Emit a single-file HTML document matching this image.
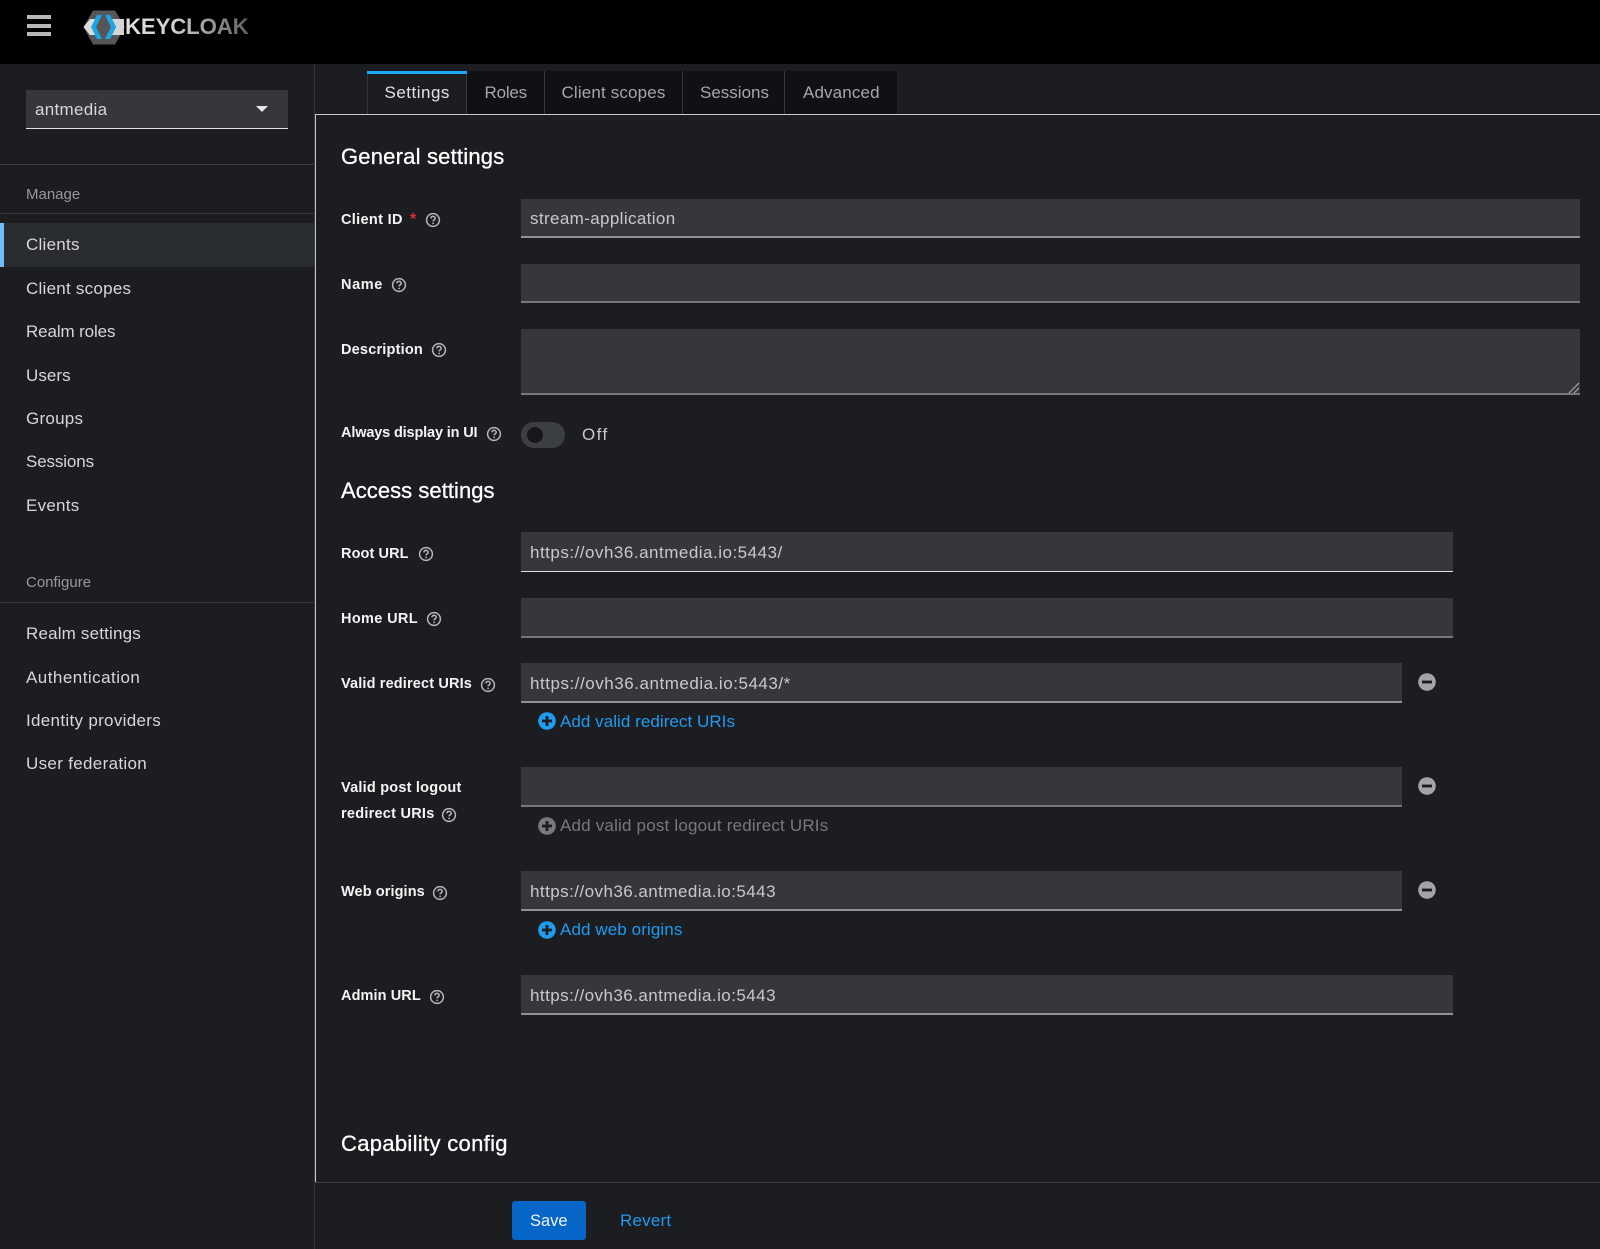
<!DOCTYPE html>
<html lang="en">
<head>
<meta charset="utf-8">
<title>Keycloak</title>
<style>
html,body{margin:0;padding:0;background:#1b1d21}
body{position:relative;width:1600px;height:1249px;overflow:hidden;font-family:"Liberation Sans",sans-serif;color:#ccc}
.a{position:absolute;display:block}
.t{position:absolute;white-space:nowrap;line-height:20px;font-size:17px}
.n{left:26px;color:#d6d7d8;letter-spacing:.25px}
.g{left:26px;font-size:15px;color:#97989a}
.l{left:341px;font-size:14.5px;font-weight:bold;letter-spacing:.1px;color:#f4f4f4}
.h{left:341px;font-size:22px;color:#fff;letter-spacing:.2px;-webkit-text-stroke:.3px #fff;line-height:26px}
.f{position:absolute;left:521px;background:#36373b;box-sizing:border-box;border-bottom:2px solid #75777a}
.w{border-bottom-color:#909295}
.v{left:530px;color:#c8c9ca;letter-spacing:.53px}
.v2{letter-spacing:.45px}
.k{color:#1f9bef}
.d{color:#77797c}
.tab{position:absolute;top:71px;height:43px;background:#0f1114;box-sizing:border-box;border-right:1px solid #34373b}
.q,.m,.p{position:absolute}
</style>
</head>
<body>
<!-- Header -->
<div class="a" style="left:0;top:0;width:1600px;height:64px;background:#000"></div>
<div class="a" style="left:27px;top:15px;width:24px;height:4px;background:#b8b8b8"></div>
<div class="a" style="left:27px;top:24px;width:24px;height:4px;background:#b8b8b8"></div>
<div class="a" style="left:27px;top:32px;width:24px;height:4px;background:#b8b8b8"></div>
<svg class="a" style="left:78px;top:4px" width="60" height="46" viewBox="78 4 60 46">
<polygon points="93,10.500 115,10.500 125,27 115,44.500 93,44.500 83.500,27" fill="#555658"/>
<polygon points="83.500,27 90,19 96,19 92,27 96,35 90,35" fill="#dcdcdc"/>
<polygon points="112,19 124,19 124,35 112,35 116,27" fill="#d4d4d4"/>
<polygon points="97,15 102,15 96,27 102,39 97,39 91,27" fill="#1da6e6"/>
<polygon points="105,15 110,15 116,27 110,39 105,39 111,27" fill="#1da6e6"/>
</svg>
<div class="t" style="left:125px;top:13px;line-height:28px;font-size:22.3px;font-weight:bold;letter-spacing:-.2px;color:transparent;background:linear-gradient(90deg,#e0e0e0 0%,#d0d0d0 40%,#5c5c5c 100%);-webkit-background-clip:text;background-clip:text">KEYCLOAK</div>

<!-- Sidebar -->
<div class="a" style="left:314px;top:64px;width:1px;height:1185px;background:#33363a"></div>
<div class="a" style="left:26px;top:90px;width:262px;height:39px;background:#36373b;box-sizing:border-box;border-bottom:1px solid #e0e0e0"></div>
<div class="t" style="left:35px;top:99.500px;letter-spacing:.3px;color:#d6d7d8">antmedia</div>
<div class="a" style="left:256px;top:106px;width:0;height:0;border-left:6px solid transparent;border-right:6px solid transparent;border-top:6px solid #e6e6e6"></div>
<div class="a" style="left:0;top:164px;width:314px;height:1px;background:#3b3e42"></div>
<div class="t g" style="top:185px">Manage</div>
<div class="a" style="left:0;top:213px;width:314px;height:1px;background:#33363a"></div>
<div class="a" style="left:0;top:223px;width:314px;height:44px;background:#292c31"></div>
<div class="a" style="left:0;top:223px;width:4px;height:44px;background:#73bcf7"></div>
<div class="t n" style="top:235px">Clients</div>
<div class="t n" style="top:278.500px">Client scopes</div>
<div class="t n" style="top:322px;letter-spacing:-.12px">Realm roles</div>
<div class="t n" style="top:365.500px;letter-spacing:.05px">Users</div>
<div class="t n" style="top:409px">Groups</div>
<div class="t n" style="top:452px;letter-spacing:-.13px">Sessions</div>
<div class="t n" style="top:495.500px">Events</div>
<div class="t g" style="top:573px">Configure</div>
<div class="a" style="left:0;top:602px;width:314px;height:1px;background:#33363a"></div>
<div class="t n" style="top:624px;letter-spacing:.18px">Realm settings</div>
<div class="t n" style="top:667.500px;letter-spacing:.47px">Authentication</div>
<div class="t n" style="top:711px;letter-spacing:.31px">Identity providers</div>
<div class="t n" style="top:754px;letter-spacing:.32px">User federation</div>

<!-- Tabs -->
<div class="tab" style="left:467px;width:78px"></div>
<div class="tab" style="left:545px;width:138px"></div>
<div class="tab" style="left:683px;width:102px"></div>
<div class="tab" style="left:785px;width:112px;border-right:0"></div>
<div class="a" style="left:367px;top:71px;width:100px;height:43px;background:#1b1d21;box-sizing:border-box;border-left:1px solid #34373b;border-right:1px solid #34373b"></div>
<div class="a" style="left:367px;top:71px;width:100px;height:3px;background:#1fa7f8"></div>
<div class="t" style="left:384.500px;top:83px;letter-spacing:.5px;color:#e2e2e2">Settings</div>
<div class="t" style="left:484.500px;top:83px;letter-spacing:-.2px;color:#a6a7a8">Roles</div>
<div class="t" style="left:561.500px;top:83px;letter-spacing:.15px;color:#a6a7a8">Client scopes</div>
<div class="t" style="left:700px;top:83px;color:#a6a7a8">Sessions</div>
<div class="t" style="left:803px;top:83px;letter-spacing:.13px;color:#a6a7a8">Advanced</div>

<!-- Panel borders -->
<div class="a" style="left:315px;top:114px;width:1285px;height:1px;background:#c8c9ca"></div>
<div class="a" style="left:315px;top:114px;width:1px;height:1068px;background:#c8c9ca"></div>

<!-- General settings -->
<div class="t h" style="top:144px">General settings</div>

<div class="t l" style="top:210px;letter-spacing:.33px">Client ID</div>
<div class="t" style="left:410px;top:210px;font-size:16px;font-weight:bold;color:#e0302a">*</div>
<svg class="q" style="left:425px;top:212px" width="16" height="16" viewBox="0 0 16 16"><circle cx="8" cy="8" r="6.4" fill="none" stroke="#b4b6b8" stroke-width="1.5"/><path d="M5.9 6.4C6 5 7 4.4 8 4.4c1.3 0 2.2.8 2.2 1.9 0 1.5-2.1 1.6-2.1 3.1" fill="none" stroke="#b4b6b8" stroke-width="1.5"/><circle cx="8.100" cy="11.400" r=".9" fill="#b4b6b8"/></svg>
<div class="f w" style="top:199px;width:1059px;height:39px"></div>
<div class="t v" style="top:209px;letter-spacing:.37px">stream-application</div>

<div class="t l" style="top:275px;letter-spacing:.6px">Name</div>
<svg class="q" style="left:391px;top:277px" width="16" height="16" viewBox="0 0 16 16"><circle cx="8" cy="8" r="6.4" fill="none" stroke="#b4b6b8" stroke-width="1.5"/><path d="M5.9 6.4C6 5 7 4.4 8 4.4c1.3 0 2.2.8 2.2 1.9 0 1.5-2.1 1.6-2.1 3.1" fill="none" stroke="#b4b6b8" stroke-width="1.5"/><circle cx="8.100" cy="11.400" r=".9" fill="#b4b6b8"/></svg>
<div class="f" style="top:264px;width:1059px;height:39px"></div>

<div class="t l" style="top:340px;letter-spacing:.2px">Description</div>
<svg class="q" style="left:431px;top:342px" width="16" height="16" viewBox="0 0 16 16"><circle cx="8" cy="8" r="6.4" fill="none" stroke="#b4b6b8" stroke-width="1.5"/><path d="M5.9 6.4C6 5 7 4.4 8 4.4c1.3 0 2.2.8 2.2 1.9 0 1.5-2.1 1.6-2.1 3.1" fill="none" stroke="#b4b6b8" stroke-width="1.5"/><circle cx="8.100" cy="11.400" r=".9" fill="#b4b6b8"/></svg>
<div class="f" style="top:329px;width:1059px;height:66px"></div>
<svg class="a" style="left:1568px;top:382px" width="12" height="12" viewBox="0 0 12 12"><path d="M1 11L11 1M6 11L11 6" stroke="#a8a9aa" stroke-width="1.200" fill="none"/></svg>

<div class="t l" style="top:423px;letter-spacing:-.15px">Always display in UI</div>
<svg class="q" style="left:486px;top:426px" width="16" height="16" viewBox="0 0 16 16"><circle cx="8" cy="8" r="6.4" fill="none" stroke="#b4b6b8" stroke-width="1.5"/><path d="M5.9 6.4C6 5 7 4.4 8 4.4c1.3 0 2.2.8 2.2 1.9 0 1.5-2.1 1.6-2.1 3.1" fill="none" stroke="#b4b6b8" stroke-width="1.5"/><circle cx="8.100" cy="11.400" r=".9" fill="#b4b6b8"/></svg>
<div class="a" style="left:521px;top:422px;width:44px;height:26px;border-radius:13px;background:#3c3f42"></div>
<div class="a" style="left:527px;top:427px;width:16px;height:16px;border-radius:50%;background:#17181b"></div>
<div class="t" style="left:582px;top:425px;letter-spacing:1.4px;color:#c8c9ca">Off</div>

<!-- Access settings -->
<div class="t h" style="top:477.500px;letter-spacing:.05px">Access settings</div>

<div class="t l" style="top:544px">Root URL</div>
<svg class="q" style="left:417.500px;top:546px" width="16" height="16" viewBox="0 0 16 16"><circle cx="8" cy="8" r="6.4" fill="none" stroke="#b4b6b8" stroke-width="1.5"/><path d="M5.9 6.4C6 5 7 4.4 8 4.4c1.3 0 2.2.8 2.2 1.9 0 1.5-2.1 1.6-2.1 3.1" fill="none" stroke="#b4b6b8" stroke-width="1.5"/><circle cx="8.100" cy="11.400" r=".9" fill="#b4b6b8"/></svg>
<div class="f" style="top:532px;width:932px;height:40px;border-bottom:1px solid #e0e0e0"></div>
<div class="t v" style="top:543px;letter-spacing:.5px">https://ovh36.antmedia.io:5443/</div>

<div class="t l" style="top:609px;letter-spacing:.35px">Home URL</div>
<svg class="q" style="left:426px;top:611px" width="16" height="16" viewBox="0 0 16 16"><circle cx="8" cy="8" r="6.4" fill="none" stroke="#b4b6b8" stroke-width="1.5"/><path d="M5.9 6.4C6 5 7 4.4 8 4.4c1.3 0 2.2.8 2.2 1.9 0 1.5-2.1 1.6-2.1 3.1" fill="none" stroke="#b4b6b8" stroke-width="1.5"/><circle cx="8.100" cy="11.400" r=".9" fill="#b4b6b8"/></svg>
<div class="f" style="top:598px;width:932px;height:40px"></div>

<div class="t l" style="top:674px;letter-spacing:.15px">Valid redirect URIs</div>
<svg class="q" style="left:480px;top:677px" width="16" height="16" viewBox="0 0 16 16"><circle cx="8" cy="8" r="6.4" fill="none" stroke="#b4b6b8" stroke-width="1.5"/><path d="M5.9 6.4C6 5 7 4.4 8 4.4c1.3 0 2.2.8 2.2 1.9 0 1.5-2.1 1.6-2.1 3.1" fill="none" stroke="#b4b6b8" stroke-width="1.5"/><circle cx="8.100" cy="11.400" r=".9" fill="#b4b6b8"/></svg>
<div class="f w" style="top:663px;width:881px;height:40px"></div>
<div class="t v" style="top:673.500px">https://ovh36.antmedia.io:5443/*</div>
<svg class="m" style="left:1418px;top:672.500px" width="18" height="18" viewBox="0 0 18 18"><circle cx="9" cy="9" r="8.800" fill="#a2a4a6"/><rect x="4" y="7.600" width="10" height="2.800" fill="#1b1d21"/></svg>
<svg class="p" style="left:538px;top:712px" width="18" height="18" viewBox="0 0 18 18"><circle cx="9" cy="9" r="8.800" fill="#1f9bef"/><path d="M9 4v10M4 9h10" stroke="#1b1d21" stroke-width="2.800"/></svg>
<div class="t k" style="left:560px;top:712px;letter-spacing:.05px">Add valid redirect URIs</div>

<div class="t l" style="top:778px;letter-spacing:.22px">Valid post logout</div>
<div class="t l" style="top:804px;letter-spacing:.25px">redirect URIs</div>
<svg class="q" style="left:441px;top:807px" width="16" height="16" viewBox="0 0 16 16"><circle cx="8" cy="8" r="6.4" fill="none" stroke="#b4b6b8" stroke-width="1.5"/><path d="M5.9 6.4C6 5 7 4.4 8 4.4c1.3 0 2.2.8 2.2 1.9 0 1.5-2.1 1.6-2.1 3.1" fill="none" stroke="#b4b6b8" stroke-width="1.5"/><circle cx="8.100" cy="11.400" r=".9" fill="#b4b6b8"/></svg>
<div class="f" style="top:767px;width:881px;height:40px"></div>
<svg class="m" style="left:1418px;top:777px" width="18" height="18" viewBox="0 0 18 18"><circle cx="9" cy="9" r="8.800" fill="#a2a4a6"/><rect x="4" y="7.600" width="10" height="2.800" fill="#1b1d21"/></svg>
<svg class="p" style="left:538px;top:816.500px" width="18" height="18" viewBox="0 0 18 18"><circle cx="9" cy="9" r="8.800" fill="#77797c"/><path d="M9 4v10M4 9h10" stroke="#1b1d21" stroke-width="2.800"/></svg>
<div class="t d" style="left:560px;top:816px;letter-spacing:.19px">Add valid post logout redirect URIs</div>

<div class="t l" style="top:882px">Web origins</div>
<svg class="q" style="left:432px;top:885px" width="16" height="16" viewBox="0 0 16 16"><circle cx="8" cy="8" r="6.4" fill="none" stroke="#b4b6b8" stroke-width="1.5"/><path d="M5.9 6.4C6 5 7 4.4 8 4.4c1.3 0 2.2.8 2.2 1.9 0 1.5-2.1 1.6-2.1 3.1" fill="none" stroke="#b4b6b8" stroke-width="1.5"/><circle cx="8.100" cy="11.400" r=".9" fill="#b4b6b8"/></svg>
<div class="f w" style="top:871px;width:881px;height:40px"></div>
<div class="t v v2" style="top:881.500px">https://ovh36.antmedia.io:5443</div>
<svg class="m" style="left:1418px;top:881px" width="18" height="18" viewBox="0 0 18 18"><circle cx="9" cy="9" r="8.800" fill="#a2a4a6"/><rect x="4" y="7.600" width="10" height="2.800" fill="#1b1d21"/></svg>
<svg class="p" style="left:538px;top:920.500px" width="18" height="18" viewBox="0 0 18 18"><circle cx="9" cy="9" r="8.800" fill="#1f9bef"/><path d="M9 4v10M4 9h10" stroke="#1b1d21" stroke-width="2.800"/></svg>
<div class="t k" style="left:560px;top:920px;letter-spacing:.1px">Add web origins</div>

<div class="t l" style="top:986px">Admin URL</div>
<svg class="q" style="left:429px;top:989px" width="16" height="16" viewBox="0 0 16 16"><circle cx="8" cy="8" r="6.4" fill="none" stroke="#b4b6b8" stroke-width="1.5"/><path d="M5.9 6.4C6 5 7 4.4 8 4.4c1.3 0 2.2.8 2.2 1.9 0 1.5-2.1 1.6-2.1 3.1" fill="none" stroke="#b4b6b8" stroke-width="1.5"/><circle cx="8.100" cy="11.400" r=".9" fill="#b4b6b8"/></svg>
<div class="f w" style="top:975px;width:932px;height:40px"></div>
<div class="t v v2" style="top:985.500px">https://ovh36.antmedia.io:5443</div>

<!-- Capability -->
<div class="t h" style="top:1131px;letter-spacing:.32px">Capability config</div>

<!-- Footer -->
<div class="a" style="left:315px;top:1182px;width:1285px;height:1px;background:#3b3e42"></div>
<div class="a" style="left:512px;top:1200.500px;width:74px;height:39.500px;background:#0566c8;border-radius:3px"></div>
<div class="t" style="left:530px;top:1211px;font-size:16.5px;color:#f0f4fa">Save</div>
<div class="t k" style="left:620px;top:1211px;letter-spacing:.2px">Revert</div>
</body>
</html>
